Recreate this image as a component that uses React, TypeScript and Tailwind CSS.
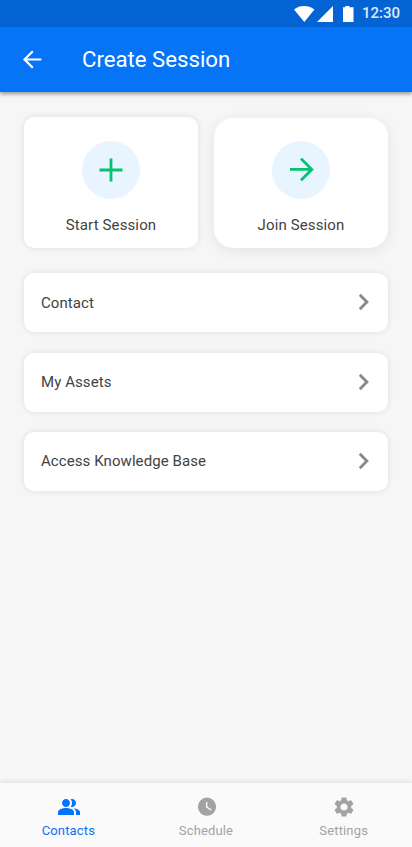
import type { ReactNode } from 'react'

interface ActionCardProps {
  label: string
  className: string
  children: ReactNode
}

function ActionCard({ label, className, children }: ActionCardProps) {
  return (
    <button className={`flex w-[174px] flex-col items-center bg-white ${className}`}>
      <span className="flex size-[58px] items-center justify-center rounded-full bg-[#e8f4ff]">
        {children}
      </span>
      <span className="mt-4 text-[15px] leading-5 tracking-[0.12px] whitespace-nowrap">{label}</span>
    </button>
  )
}

interface NavItemProps {
  label: string
  path: string
  active?: boolean
}

function NavItem({ label, path, active }: NavItemProps) {
  return (
    <a className={`flex flex-1 flex-col items-center pt-3 ${active ? 'text-[#0574f7]' : 'pl-px text-[#a3a3a3]'}`}>
      <svg viewBox="0 0 24 24" className="ml-px size-6" fill="currentColor">
        <path d={path} />
      </svg>
      <span className="mt-1 text-[13px] leading-4 tracking-[0.15px]">{label}</span>
    </a>
  )
}

const rows = [
  { label: 'Contact', className: 'mt-[25px]', iconClassName: 'mb-px' },
  { label: 'My Assets', className: 'mt-[21px] pb-0.5', iconClassName: 'mt-px' },
  { label: 'Access Knowledge Base', className: 'mt-5 pb-0.5', iconClassName: 'mt-px' },
]

const navItems = [
  {
    label: 'Contacts',
    active: true,
    path: 'M16.67 13.13C18.04 14.06 19 15.32 19 17v3h4v-3c0-2.18-3.57-3.47-6.33-3.87zM15 12c2.21 0 4-1.79 4-4s-1.79-4-4-4c-.47 0-.91.1-1.33.24C14.5 5.27 15 6.58 15 8s-.5 2.73-1.33 3.76c.42.14.86.24 1.33.24zM9 12c2.21 0 4-1.79 4-4s-1.79-4-4-4-4 1.79-4 4 1.79 4 4 4zm0 1c-2.67 0-8 1.34-8 4v3h16v-3c0-2.66-5.33-4-8-4z',
  },
  {
    label: 'Schedule',
    path: 'M12 2.6a9.1 9.1 0 1 0 0 18.2 9.1 9.1 0 0 0 0-18.2zm3.8 12.8L11 12.4V7.1h1.4v4.7l4.1 2.5z',
  },
  {
    label: 'Settings',
    path: 'M19.14 12.94c.04-.3.06-.61.06-.94 0-.32-.02-.64-.07-.94l2.03-1.58c.18-.14.23-.41.12-.61l-1.92-3.32c-.12-.22-.37-.29-.59-.22l-2.39.96c-.5-.38-1.03-.7-1.62-.94l-.36-2.54c-.04-.24-.24-.41-.48-.41h-3.84c-.24 0-.43.17-.47.41l-.36 2.54c-.59.24-1.13.57-1.62.94l-2.39-.96c-.22-.08-.47 0-.59.22L2.74 8.87c-.12.21-.08.47.12.61l2.03 1.58c-.05.3-.09.63-.09.94s.02.64.07.94l-2.03 1.58c-.18.14-.23.41-.12.61l1.92 3.32c.12.22.37.29.59.22l2.39-.96c.5.38 1.03.7 1.62.94l.36 2.54c.05.24.24.41.48.41h3.84c.24 0 .44-.17.47-.41l.36-2.54c.59-.24 1.13-.56 1.62-.94l2.39.96c.22.08.47 0 .59-.22l1.92-3.32c.12-.22.07-.47-.12-.61l-2.01-1.58zM12 15.6c-1.98 0-3.6-1.62-3.6-3.6s1.62-3.6 3.6-3.6 3.6 1.62 3.6 3.6-1.62 3.6-3.6 3.6z',
  },
]

export default function App() {
  return (
    <div className="flex h-[847px] w-[412px] flex-col overflow-hidden bg-[#f6f6f6] font-['Roboto',sans-serif] text-[#424242]">
      <header className="bg-[#0574f7] text-white shadow-[0_2px_4px_rgba(0,0,0,0.4)]">
        <div className="flex h-[27px] items-center justify-end bg-[#0564d3] pr-3">
          <svg viewBox="0 0 60 18" className="mr-[8px] h-[18px] w-[60px]" fill="white">
            <path d="M0 4.5C5.8-.1 14.2-.1 20.5 4.5L10.3 17z" />
            <path d="M23 17L39 1v16z" />
            <path d="M49 2.3h2.3V1h4.2v1.3H59.5V17H49z" />
          </svg>
          <span className="pb-px text-[15px] leading-[24px] font-medium text-[#dfeafa]">12:30</span>
        </div>
        <div className="flex h-[65px] items-center pb-0.5 pl-5">
          <svg viewBox="0 0 24 24" className="size-6" fill="none" stroke="white" strokeWidth="2.2">
            <path d="M21.3 12.5H4.5M12.8 4.2L4.5 12.5l8.3 8.3" />
          </svg>
          <h1 className="ml-[38px] text-[22.2px] leading-8">Create Session</h1>
        </div>
      </header>

      <main className="flex-1 px-6 pt-[25px]">
        <div className="flex h-[131px] justify-between">
          <ActionCard label="Start Session" className="rounded-[10px] pt-6 shadow-[0_0_6px_rgba(0,0,0,0.1)]">
            <svg viewBox="0 0 24 24" className="size-6" fill="none" stroke="#05c270" strokeWidth="2.8">
              <path d="M12 .5v23M.5 12h23" />
            </svg>
          </ActionCard>
          <ActionCard label="Join Session" className="mt-px rounded-[19px] pt-[23px] shadow-[0_3px_14px_rgba(0,0,0,0.08)]">
            <svg viewBox="0 0 24 24" className="ml-0.5 size-6" fill="none" stroke="#05c270" strokeWidth="2.8">
              <path d="M0 11.4h22M11 .6l10.8 10.8L11 22.2" />
            </svg>
          </ActionCard>
        </div>
        {rows.map((row) => (
          <button
            key={row.label}
            className={`flex h-[59px] w-full items-center justify-between rounded-[10px] bg-white pr-[19px] pl-[17px] shadow-[0_0_6px_rgba(0,0,0,0.1)] ${row.className}`}
          >
            <span className="text-[15px] leading-5 tracking-[0.08px]">{row.label}</span>
            <svg viewBox="0 0 10 18" className={`h-[18px] w-[10px] ${row.iconClassName}`} fill="none" stroke="#87888e" strokeWidth="2.8">
              <path d="M.8 1.8L7.9 9 .8 16.2" />
            </svg>
          </button>
        ))}
      </main>

      <nav className="flex h-16 bg-[#fafafa] shadow-[0_0_6px_rgba(0,0,0,0.15)]">
        {navItems.map((item) => (
          <NavItem key={item.label} {...item} />
        ))}
      </nav>
    </div>
  )
}
